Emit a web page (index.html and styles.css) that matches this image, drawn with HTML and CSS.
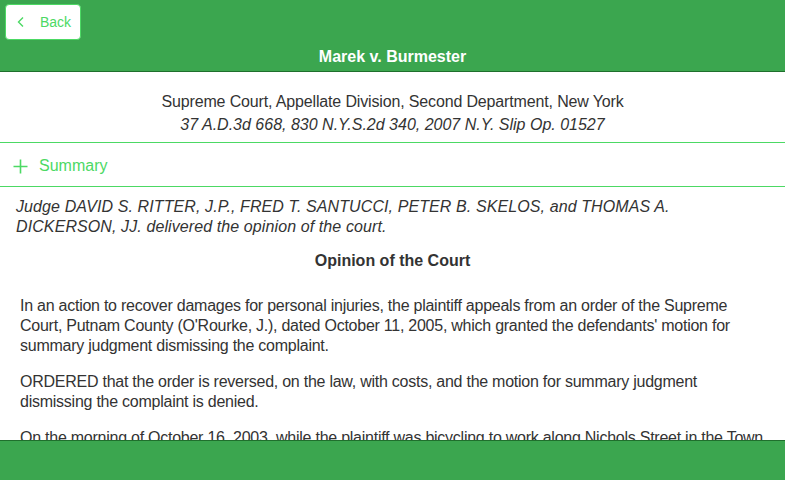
FILE: index.html
```html
<!DOCTYPE html>
<html lang="en">
  <head>
    <meta charset="utf-8" />
    <meta name="viewport" content="width=device-width, initial-scale=1" />
    <link rel="stylesheet" href="styles.css">
    <title>Marek v. Burmester</title>
  </head>
  <body>
    <div class="page">
      <header class="bar">
        <a class="back-btn" href="#">
          <svg class="chevron" width="8" height="12" viewBox="0 0 8 12">
            <polyline points="6,1.5 1.5,6 6,10.5" fill="none" stroke="currentColor" stroke-width="1.4" />
          </svg>
          <span>Back</span>
        </a>
        <h1 class="bar-title">Marek v. Burmester</h1>
      </header>

      <main class="content">
        <section class="citation">
          <div class="court-line">Supreme Court, Appellate Division, Second Department, New York</div>
          <div class="cite-line">37 A.D.3d 668, 830 N.Y.S.2d 340, 2007 N.Y. Slip Op. 01527</div>
        </section>

        <a class="summary-toggle" href="#">
          <svg class="plus" width="15" height="15" viewBox="0 0 15 15">
            <path d="M7.5 0.5v14M0.5 7.5h14" stroke="currentColor" stroke-width="1.6" />
          </svg>
          <span>Summary</span>
        </a>

        <article class="opinion">
          <p class="judges">Judge DAVID S. RITTER, J.P., FRED T. SANTUCCI, PETER B. SKELOS, and THOMAS A. DICKERSON, JJ. delivered the opinion of the court.</p>
          <h2 class="opinion-title">Opinion of the Court</h2>
          <p>In an action to recover damages for personal injuries, the plaintiff appeals from an order of the Supreme Court, Putnam County (O'Rourke, J.), dated October 11, 2005, which granted the defendants' motion for summary judgment dismissing the complaint.</p>
          <p>ORDERED that the order is reversed, on the law, with costs, and the motion for summary judgment dismissing the complaint is denied.</p>
          <p>On the morning of October 16, 2003, while the plaintiff was bicycling to work along Nichols Street in the Town of Carmel, he was struck by a vehicle owned and operated by the defendants.</p>
        </article>
      </main>

      <footer class="bar bar-bottom"></footer>
    </div>
  </body>
</html>
```

FILE: styles.css
```css
:root {
  --bar-green: #3ba64f;
  --bar-edge: #1f6f2d;
  --accent: #4cd964;
  --text: #333;
}

* {
  box-sizing: border-box;
}

html {
  font-family: "Liberation Sans", Arial, Helvetica, sans-serif;
  font-size: 16px;
  line-height: 20px;
  color: var(--text);
}

body {
  margin: 0;
}

.page {
  display: flex;
  flex-direction: column;
  height: 100vh;
  overflow: hidden;
}

.bar {
  background-color: var(--bar-green);
  flex: none;
}

header.bar {
  padding: 4px 5px 4px;
  border-bottom: 1px solid var(--bar-edge);
}

.back-btn {
  display: inline-flex;
  align-items: center;
  gap: 15px;
  width: 76px;
  height: 36px;
  padding: 0 0 0 11px;
  background: #fff;
  border: 1px solid var(--accent);
  border-radius: 4px;
  color: var(--accent);
  font-size: 14px;
  text-decoration: none;
}

.bar-title {
  margin: 7px 0 0;
  font-size: 16px;
  line-height: 20px;
  text-align: center;
  color: #fff;
}

.bar-bottom {
  height: 40px;
  border-top: 1px solid var(--bar-edge);
}

.content {
  flex: 1;
  overflow: hidden;
}

.citation {
  padding: 18px 16px 6px;
  line-height: 23px;
  text-align: center;
  border-bottom: 1px solid var(--accent);

  & .court-line {
    letter-spacing: -0.15px;
  }

  & .cite-line {
    font-style: italic;
  }
}

.summary-toggle {
  display: flex;
  align-items: center;
  gap: 11px;
  padding: 13px 13px 10px;
  color: var(--accent);
  text-decoration: none;
  border-bottom: 1px solid var(--accent);
}

.opinion {
  padding: 10px 16px 0;

  & p {
    margin: 0 0 16px;
    padding: 0 0 0 4px;
    letter-spacing: -0.25px;
  }

  & .judges {
    font-style: italic;
    margin-bottom: 14px;
    padding: 0 6px 0 0;
    letter-spacing: 0.1px;
  }
}

.opinion-title {
  margin: 0 0 25px;
  font-size: 16px;
  line-height: 20px;
  text-align: center;
}
```
